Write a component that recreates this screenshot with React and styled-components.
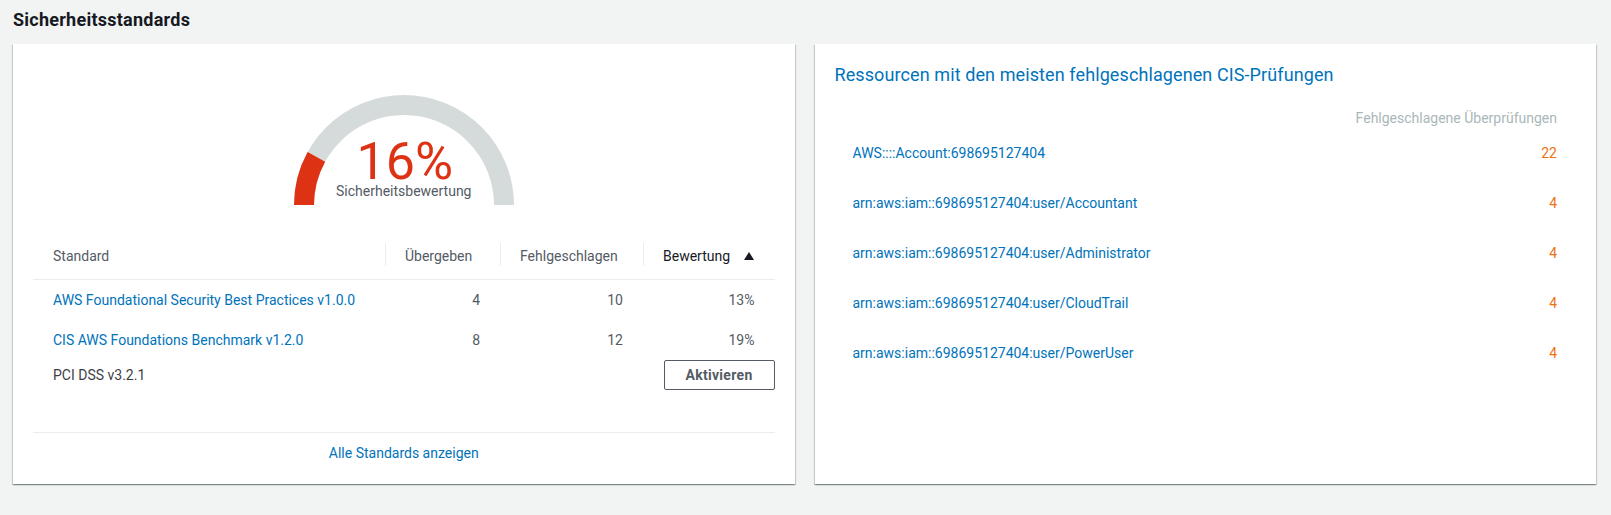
import React from 'react'
import styled, { createGlobalStyle } from 'styled-components'

const GlobalStyle = createGlobalStyle`
    body {
        margin: 0;
        background: #f2f3f3;
        font-family: Roboto, "Liberation Sans", sans-serif;
        color: #16191f;
    }
`

const standards = [
    { name: 'AWS Foundational Security Best Practices v1.0.0', passed: 4, failed: 10, score: '13%', height: 42 },
    { name: 'CIS AWS Foundations Benchmark v1.2.0', passed: 8, failed: 12, score: '19%', height: 38 },
]

const resources = [
    { arn: 'AWS::::Account:698695127404', count: 22 },
    { arn: 'arn:aws:iam::698695127404:user/Accountant', count: 4 },
    { arn: 'arn:aws:iam::698695127404:user/Administrator', count: 4 },
    { arn: 'arn:aws:iam::698695127404:user/CloudTrail', count: 4 },
    { arn: 'arn:aws:iam::698695127404:user/PowerUser', count: 4 },
]

const Gauge = ({ value }) => {
    const arc = Math.PI * 100
    return (
        <GaugeWrap>
            <svg width="220" height="110" viewBox="0 0 220 110">
                <path d="M10 110 A100 100 0 0 1 210 110" fill="none" stroke="#d5dbdb" strokeWidth="20" />
                <path
                    d="M10 110 A100 100 0 0 1 210 110"
                    fill="none"
                    stroke="#dd3214"
                    strokeWidth="20"
                    strokeDasharray={`${arc * value / 100} ${arc}`}
                />
            </svg>
            <GaugeLabel>
                <span className='value'>{value}%</span>
                <span className='caption'>Sicherheitsbewertung</span>
            </GaugeLabel>
        </GaugeWrap>
    )
}

const SortUp = () => (
    <svg width="10" height="8" viewBox="0 0 10 8">
        <path d="M5 0 L10 8 L0 8 Z" fill="#16191f" />
    </svg>
)

const App = () => {
    return (
        <Page>
            <GlobalStyle />
            <PageTitle>Sicherheitsstandards</PageTitle>
            <Columns>
                <Card>
                    <Gauge value={16} />
                    <StandardsTable>
                        <colgroup>
                            <col style={{ width: 352 }} />
                            <col style={{ width: 115 }} />
                            <col style={{ width: 143 }} />
                            <col />
                        </colgroup>
                        <thead>
                            <tr>
                                <HeadCell first>Standard</HeadCell>
                                <HeadCell>Übergeben</HeadCell>
                                <HeadCell>Fehlgeschlagen</HeadCell>
                                <HeadCell sorted>
                                    Bewertung <SortUp />
                                </HeadCell>
                            </tr>
                        </thead>
                        <tbody>
                            {standards.map(s => (
                                <Row key={s.name} h={s.height}>
                                    <td><Link>{s.name}</Link></td>
                                    <NumCell>{s.passed}</NumCell>
                                    <NumCell>{s.failed}</NumCell>
                                    <NumCell>{s.score}</NumCell>
                                </Row>
                            ))}
                            <Row h={32}>
                                <td className='plain'>PCI DSS v3.2.1</td>
                                <td />
                                <td />
                                <ButtonCell>
                                    <Button>Aktivieren</Button>
                                </ButtonCell>
                            </Row>
                        </tbody>
                    </StandardsTable>
                    <Footer>
                        <Link>Alle Standards anzeigen</Link>
                    </Footer>
                </Card>
                <Card>
                    <CardTitle>Ressourcen mit den meisten fehlgeschlagenen CIS-Prüfungen</CardTitle>
                    <ResourceTable>
                        <thead>
                            <tr>
                                <th />
                                <th className='right'>Fehlgeschlagene Überprüfungen</th>
                            </tr>
                        </thead>
                        <tbody>
                            {resources.map(r => (
                                <tr key={r.arn}>
                                    <td><Link>{r.arn}</Link></td>
                                    <td className='count'>{r.count}</td>
                                </tr>
                            ))}
                        </tbody>
                    </ResourceTable>
                </Card>
            </Columns>
        </Page>
    )
}

export default App

const Page = styled.div`
    padding: 9px 15px 31px 13px;
`

const PageTitle = styled.h2`
    margin: 0 0 13px;
    font-size: 18px;
    line-height: 22px;
    font-weight: 700;
    letter-spacing: 0.25px;
    color: #16191f;
`

const Columns = styled.div`
    display: grid;
    grid-template-columns: 1fr 1fr;
    gap: 20px;
`

const Card = styled.div`
    background: #fff;
    height: 440px;
    box-sizing: border-box;
    padding: 0 20px;
    box-shadow: 0 1px 1px 0 rgba(0, 28, 36, 0.3), 1px 1px 1px 0 rgba(0, 28, 36, 0.15), -1px 1px 1px 0 rgba(0, 28, 36, 0.15);
    display: flex;
    flex-direction: column;
`

const GaugeWrap = styled.div`
    position: relative;
    align-self: center;
    width: 220px;
    height: 110px;
    margin-top: 51px;

    svg {
        display: block;
    }
`

const GaugeLabel = styled.div`
    position: absolute;
    left: 0;
    right: 0;
    top: 47px;
    display: flex;
    flex-direction: column;
    align-items: center;

    .value {
        font-size: 52px;
        line-height: 40px;
        height: 40px;
        color: #dd3214;
        padding-left: 2px;
    }
    .caption {
        font-size: 14px;
        line-height: 16px;
        color: #545b64;
        margin-top: 1px;
    }
`

const StandardsTable = styled.table`
    width: 100%;
    table-layout: fixed;
    border-collapse: collapse;
    margin-top: 32px;
    font-size: 14px;
    color: #545b64;

    td {
        padding: 0 20px;
        line-height: 20px;
    }
    .plain {
        color: #16191f;
        opacity: 0.85;
    }
`

const HeadCell = styled.th`
    position: relative;
    height: 42px;
    box-sizing: border-box;
    padding: 0 20px 4px;
    text-align: left;
    font-weight: 400;
    color: ${p => (p.sorted ? '#16191f' : '#545b64')};
    border-bottom: 1px solid #eaeded;
    white-space: nowrap;

    svg {
        margin-left: 10px;
        vertical-align: 1px;
    }

    &::before {
        content: '';
        display: ${p => (p.first ? 'none' : 'block')};
        position: absolute;
        left: 0;
        top: 6px;
        height: 23px;
        border-left: 1px solid #eaeded;
    }
`

const Row = styled.tr`
    height: ${p => p.h}px;
`

const NumCell = styled.td`
    text-align: right;
`

const ButtonCell = styled.td`
    && {
        text-align: right;
        padding-right: 0;
    }
`

const Button = styled.button`
    width: 111px;
    height: 30px;
    border: 1px solid #545b64;
    border-radius: 2px;
    background: #fff;
    font-family: inherit;
    font-size: 14px;
    font-weight: 700;
    color: #545b64;
    letter-spacing: 0.3px;
`

const Link = styled.a`
    color: #0073bb;
    text-decoration: none;
    cursor: pointer;
`

const Footer = styled.div`
    margin-top: auto;
    margin-bottom: 21px;
    border-top: 1px solid #eaeded;
    padding-top: 10px;
    line-height: 20px;
    font-size: 14px;
    text-align: center;
`

const CardTitle = styled.h3`
    margin: 20px 0 0;
    font-size: 18px;
    line-height: 22px;
    font-weight: 400;
    letter-spacing: 0.1px;
    color: #0073bb;
`

const ResourceTable = styled.table`
    width: 100%;
    border-collapse: collapse;
    margin-top: 14px;
    font-size: 14px;

    th {
        height: 28px;
        padding: 8px 19px 0;
        box-sizing: border-box;
        line-height: 20px;
        font-weight: 400;
        color: #aab7b8;
        vertical-align: top;
    }
    .right {
        text-align: right;
    }
    td {
        height: 50px;
        padding: 0 19px 0 18px;
        line-height: 20px;
    }
    .count {
        text-align: right;
        color: #ec7211;
    }
`
